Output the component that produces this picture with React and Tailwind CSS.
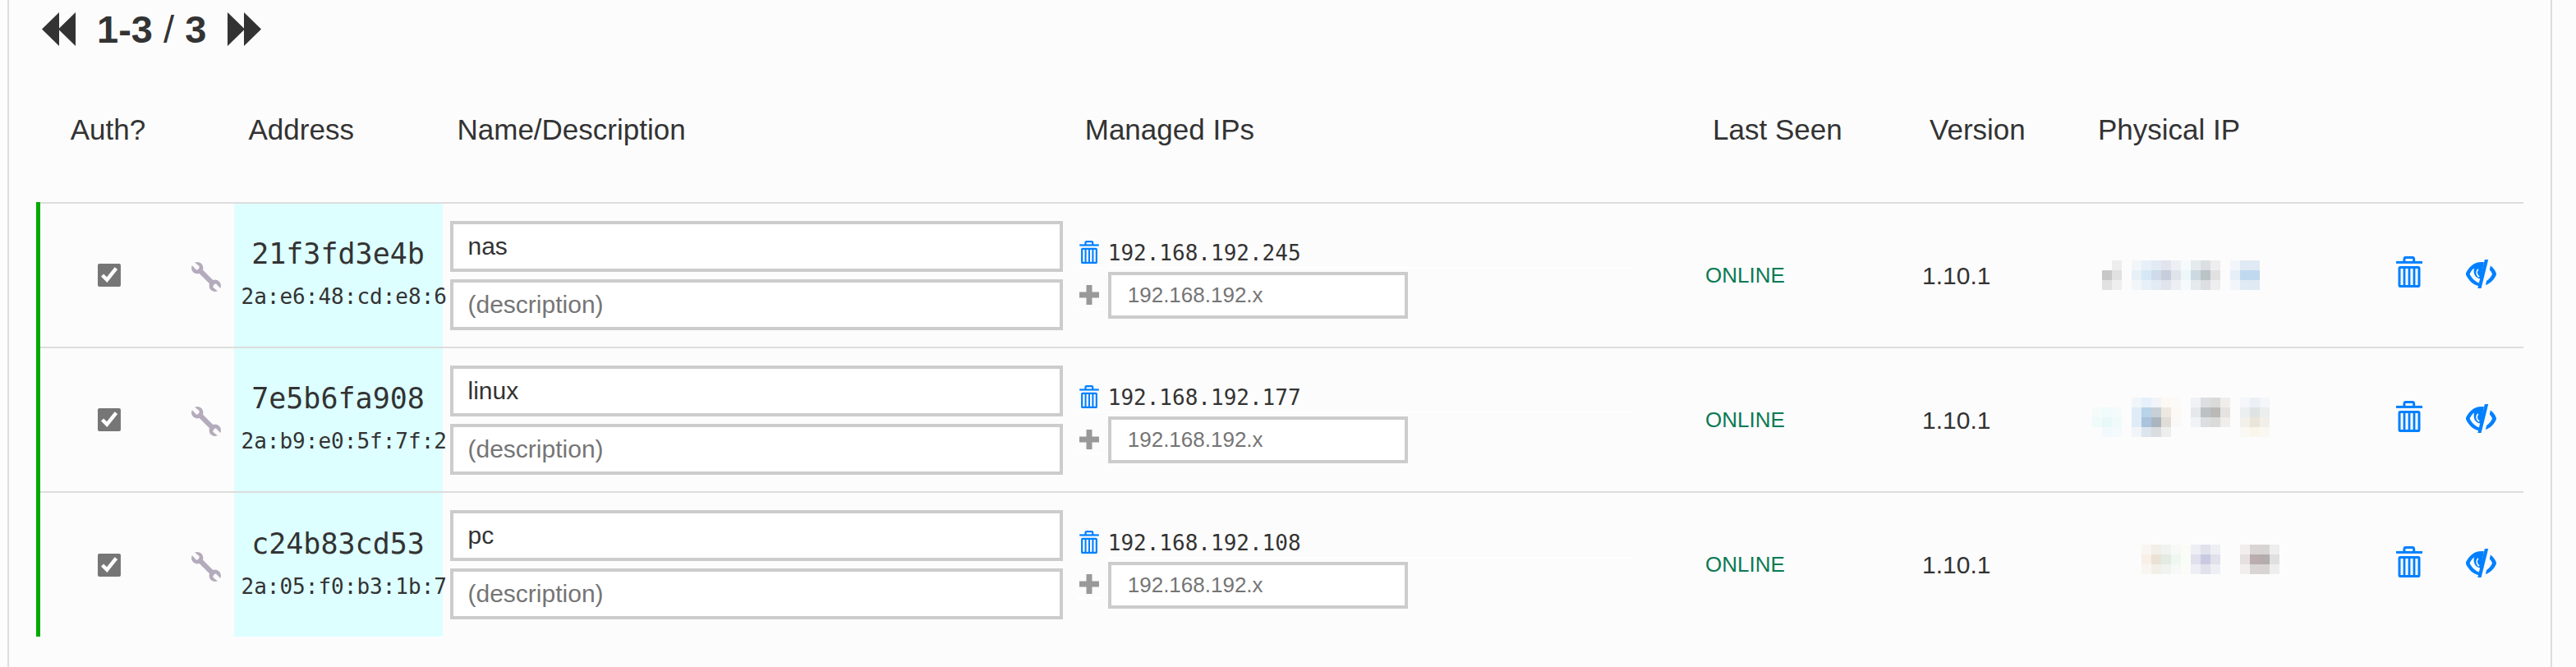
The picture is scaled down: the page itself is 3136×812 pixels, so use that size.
import { useState } from 'react';

const MEMBERS = [
  {
    address: '21f3fd3e4b',
    mac: '2a:e6:48:cd:e8:6',
    name: 'nas',
    ip: '192.168.192.245',
    version: '1.10.1',
    mosaicTop: 9,
    mosaic: [
      [null, null, '#ededed', null, '#f2f6f9', '#e7f0f8', '#e2eaf3', '#e1e3ed', '#eeeff4', '#f5fafd', '#e5eaed', '#dbdfe2', '#eeeeee', null, '#f2f6fa', '#e0eaf4', '#e0eaf4'],
      [null, '#c8c8c8', '#e1e1e1', null, '#e7f0f7', '#d6e8f6', '#cfdbea', '#c7cdda', '#e1e3eb', '#edf6f9', '#cdd9e0', '#bac3c6', '#e1e1e1', null, '#e6eff7', '#c1d9ef', '#c1d9ef'],
      [null, '#e1e1e1', '#eeeeee', null, '#f2f6f9', '#e7f0f8', '#e2eaf3', '#e1e3ed', '#eeeff4', '#f5fafd', '#e5eaed', '#dbdfe2', '#eeeeee', null, '#f2f6fa', '#e0eaf4', '#e0eaf4'],
    ],
  },
  {
    address: '7e5b6fa908',
    mac: '2a:b9:e0:5f:7f:2',
    name: 'linux',
    ip: '192.168.192.177',
    version: '1.10.1',
    mosaicTop: 0,
    mosaic: [
      [null, null, null, null, '#f0f5f9', '#e6f0fa', '#f1f4f8', '#fcf9f4', '#fbfaf9', null, '#f0f2f5', '#dddee1', '#dadad8', '#efeeed', null, '#f4f6fa', '#ebf0f7', '#f4f6f9'],
      ['#f5fbfb', '#f0fbfb', '#f5fbfb', null, '#dfecf8', '#b8d2e8', '#c7d0d6', '#ece8e0', '#fcf8f3', null, '#e5e8ea', '#bcc2c4', '#bab9b7', '#e4e3e1', null, '#ebeeee', '#dfe3e4', '#eceeed'],
      ['#effafa', '#e8f8f8', '#f1fafa', null, '#dfecf8', '#abc3dd', '#abb5c0', '#e0ddd9', '#faf9f8', null, '#f0f2f5', '#dddee1', '#dadad8', '#efeeed', null, '#f2f0ea', '#ebe4d9', '#f2efe9'],
      [null, '#f1f9fc', '#f5fafc', null, '#f1f5f9', '#dce5ee', '#d9dde0', '#eeeeee', null, null, null, null, null, null, null, '#faf8f3', '#faf6ec', '#faf8f3'],
    ],
  },
  {
    address: 'c24b83cd53',
    mac: '2a:05:f0:b3:1b:7',
    name: 'pc',
    ip: '192.168.192.108',
    version: '1.10.1',
    mosaicTop: 2,
    mosaic: [
      [null, null, null, null, null, '#f9f6f1', '#f2efe8', '#f0f3ef', '#f6f9f5', '#fbfcf8', '#eeeef5', '#e2e2ed', '#eeeef5', null, null, '#f2eeee', '#dad5d5', '#d9d4d4', '#eeeeee'],
      [null, null, null, null, null, '#f8efe8', '#ebe2d5', '#e3ebe2', '#eef7f0', '#fafcf6', '#e1e1ed', '#c9c9e1', '#e1e1ec', null, null, '#e6e0e0', '#bbacad', '#b3adad', '#e0e0e1'],
      [null, null, null, null, null, '#f9f6f1', '#f2efe8', '#f0f3ef', '#f6f9f5', '#fbfcf8', '#eeeef5', '#e2e2ed', '#eeeef5', null, null, '#f2eeee', '#dad5d5', '#d9d4d4', '#eeeeee'],
    ],
  },
];

const MONO = "font-['Lucida_Console','DejaVu_Sans_Mono',monospace]";

function TrashIcon({ className }) {
  return (
    <svg viewBox="0 0 32 38" className={className} fill="none" stroke="currentColor" aria-hidden="true">
      <path d="M9.9 7V3.4q0-2 2-2h7.8q2 0 2 2V7" strokeWidth="3" />
      <path d="M0 7.4h32" strokeWidth="3" />
      <rect x="4" y="13.400" width="24" height="23.200" rx="1" strokeWidth="3" />
      <path d="M10 13v23M16 13v23M22 13v23" strokeWidth="2.800" />
    </svg>
  );
}

function EyeCloseIcon({ className }) {
  return (
    <svg viewBox="0 0 37 35" className={className} fill="none" aria-hidden="true">
      <path d="M22 3.2C11 1.6 4 8.500 0 16.400q-.4 1.100 0 2.200C3.600 26 9 31 15.600 32.300l.9-3.700C11.500 27.300 7 23 4.600 17.600 6 14.500 7.600 12 10 10.400 8.600 17 11 22.500 17.800 23.600z" fill="currentColor" />
      <path d="M14.800 11.800c-2.600 3.400-2 7.200 1.400 9.200" stroke="#fcfcfc" strokeWidth="1.700" />
      <path d="M22.900 0h4.300L18.600 35h-4.300z" fill="currentColor" />
      <path d="M29.900 7.600c3.200 2.300 5.500 5.400 6.900 8.900q.4 1.100 0 2.200c-2.400 5.600-6.900 10.400-12.900 12.300l1.200-5c3.200-2 5.500-4.700 7-8.400-.8-1.900-1.900-3.600-3.300-5z" fill="currentColor" />
    </svg>
  );
}

function WrenchIcon({ className }) {
  return (
    <svg viewBox="0 0 35 35" className={className} fill="none" aria-hidden="true">
      <path d="M9 9l18 18" stroke="#b4abbd" strokeWidth="6" />
      <circle cx="7" cy="7" r="7" fill="#b4abbd" />
      <circle cx="28" cy="28" r="7" fill="#b4abbd" />
      <path d="M-1 2L2 -1L9.500 5Q9.500 8.500 6 9.500zM36 33L33 36L25.500 30Q25.500 26.500 29 25.500z" fill="#fcfcfc" />
    </svg>
  );
}

function PlusIcon({ className }) {
  return (
    <svg viewBox="0 0 24 24" className={className} aria-hidden="true">
      <path d="M8.500 0h7v8.500H24v7h-8.500V24h-7v-8.500H0v-7h8.500z" fill="#999" />
    </svg>
  );
}

function PhysicalIp({ cells, top }) {
  return (
    <svg width="228" height="54" className="block" shapeRendering="crispEdges" aria-hidden="true">
      {cells.map((row, y) =>
        row.map((color, x) =>
          color ? <rect key={`${x}-${y}`} x={x * 12} y={top + y * 12} width="12" height="12" fill={color} /> : null
        )
      )}
    </svg>
  );
}

function MemberRow({ member }) {
  const [auth, setAuth] = useState(true);
  const [name, setName] = useState(member.name);
  const [description, setDescription] = useState('');
  const [newIp, setNewIp] = useState('');

  return (
    <tr className="h-[176px] border-t-2 border-[#ddd]">
      <td className="border-l-[5px] border-l-[#00aa00] text-center">
        <input
          type="checkbox"
          aria-label={`Authorize ${member.address}`}
          checked={auth}
          onChange={(e) => setAuth(e.target.checked)}
          className="size-7 align-middle accent-[#767676]"
        />
      </td>
      <td className="pt-1">
        <button type="button" aria-label="Settings" className="mx-auto block">
          <WrenchIcon className="size-9" />
        </button>
      </td>
      <td className={`bg-[#ddffff] px-[9px] whitespace-nowrap ${MONO}`}>
        <div className="text-center text-[35px] leading-[52px]">{member.address}</div>
        <div className="text-[26px] leading-[52px]">{member.mac}</div>
      </td>
      <td className="px-[9px] py-5">
        <div className="flex flex-col gap-[9px]">
          <input
            type="text"
            aria-label="Name"
            value={name}
            onChange={(e) => setName(e.target.value)}
            className="h-[62px] w-full border-4 border-[#ccc] bg-white px-[18px] text-[30px]"
          />
          <input
            type="text"
            aria-label="Description"
            placeholder="(description)"
            value={description}
            onChange={(e) => setDescription(e.target.value)}
            className="h-[62px] w-full border-4 border-[#ccc] bg-white px-[18px] text-[30px] placeholder:text-[#757575]"
          />
        </div>
      </td>
      <td className="pr-[82px] pl-[9px]">
        <div className="flex flex-col gap-1">
          <div className="flex items-end gap-[9px]">
            <button type="button" aria-label="Remove IP" className="flex w-7 justify-center border-b-2 border-white pb-1 text-[#0080ff]">
              <TrashIcon className="h-7 w-6" />
            </button>
            <span className={`h-[45px] flex-1 border-b-2 border-white text-[26px] leading-[52px] ${MONO}`}>{member.ip}</span>
          </div>
          <div className="flex items-center gap-[9px]">
            <button type="button" aria-label="Add IP" className="flex w-7 justify-center border-b-2 border-white py-1">
              <PlusIcon className="size-6" />
            </button>
            <input
              type="text"
              aria-label="New managed IP"
              placeholder="192.168.192.x"
              value={newIp}
              onChange={(e) => setNewIp(e.target.value)}
              className="h-[57px] w-[365px] border-4 border-[#ccc] bg-white px-5 text-[26px] placeholder:text-[#757575]"
            />
          </div>
        </div>
      </td>
      <td className="px-[9px] text-[26px] text-[#0b7a55]">ONLINE</td>
      <td className="px-[9px] text-[30px]">{member.version}</td>
      <td className="px-[11px]">
        <PhysicalIp cells={member.mosaic} top={member.mosaicTop} />
      </td>
      <td>
        <button type="button" aria-label="Delete member" className="mx-auto block pb-2 text-[#0080ff]">
          <TrashIcon className="h-[38px] w-8" />
        </button>
      </td>
      <td>
        <button type="button" aria-label="Hide member" className="mx-auto block pb-1 text-[#0080ff]">
          <EyeCloseIcon className="h-[35px] w-[37px]" />
        </button>
      </td>
    </tr>
  );
}

export default function App() {
  return (
    <div className="min-h-screen overflow-hidden bg-[#fcfcfc] pr-[29px] pl-[9px] font-['Liberation_Sans',Arial,sans-serif] text-[#333]">
      <div className="min-h-screen border-x-2 border-[#ddd] px-[33px]">
        {/* Pager */}
        <div className="flex h-[70px] items-center gap-[26px] pl-[7px] text-[47px] leading-none">
          <button type="button" aria-label="Previous page">
            <svg width="41" height="41" viewBox="0 0 41 41" fill="#333" aria-hidden="true">
              <path d="M0 20.500L21 0v41zM20 20.500L41 0v41z" />
            </svg>
          </button>
          <span>
            <strong>1-3</strong> / <strong>3</strong>
          </span>
          <button type="button" aria-label="Next page">
            <svg width="41" height="41" viewBox="0 0 41 41" fill="#333" aria-hidden="true">
              <path d="M0 0l21 20.500L0 41zM20 0l21 20.500L20 41z" />
            </svg>
          </button>
        </div>

        {/* Members */}
        <table className="w-full table-fixed border-collapse text-left">
          <colgroup>
            <col className="w-[170px]" />
            <col className="w-[68px]" />
            <col className="w-[254px]" />
            <col />
            <col />
            <col className="w-[264px]" />
            <col className="w-[205px]" />
            <col className="w-[362px]" />
            <col className="w-[70px]" />
            <col className="w-[104px]" />
          </colgroup>
          <thead>
            <tr className="h-[177px] text-[35px] [&>th]:px-[18px] [&>th]:font-normal">
              <th className="text-center">Auth?</th>
              <th></th>
              <th>Address</th>
              <th>Name/Description</th>
              <th>Managed IPs</th>
              <th>Last Seen</th>
              <th>Version</th>
              <th>Physical IP</th>
              <th></th>
              <th></th>
            </tr>
          </thead>
          <tbody>
            {MEMBERS.map((member) => (
              <MemberRow key={member.address} member={member} />
            ))}
          </tbody>
        </table>
      </div>
    </div>
  );
}
